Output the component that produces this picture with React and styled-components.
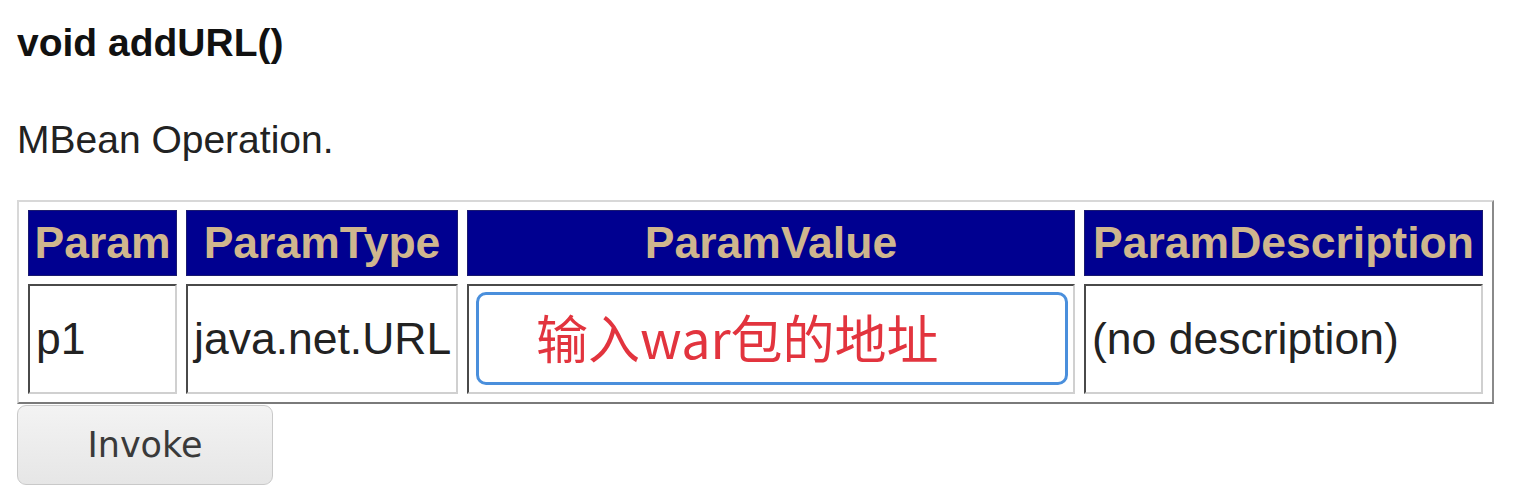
import styled, { createGlobalStyle } from 'styled-components';

const GlobalStyle = createGlobalStyle`
  body {
    margin: 0;
    background: #ffffff;
    font-family: "Liberation Sans", Arial, sans-serif;
  }
`;

export default function App() {
  return (
    <Page>
      <GlobalStyle />
      <Title>void addURL()</Title>
      <Description>MBean Operation.</Description>
      <ParamTable>
        <thead>
          <tr>
            <HeadCell $width={149}>Param</HeadCell>
            <HeadCell $width={272}>ParamType</HeadCell>
            <HeadCell $width={607}>ParamValue</HeadCell>
            <HeadCell $width={399}>ParamDescription</HeadCell>
          </tr>
        </thead>
        <tbody>
          <tr>
            <Cell>p1</Cell>
            <Cell>java.net.URL</Cell>
            <InputCell>
              <ValueInput defaultValue="输入war包的地址" />
            </InputCell>
            <Cell>(no description)</Cell>
          </tr>
        </tbody>
      </ParamTable>
      <InvokeButton>Invoke</InvokeButton>
    </Page>
  );
}

const Page = styled.div`
  padding: 20px 0 0 17px;
`;

const Title = styled.h4`
  margin: 0;
  font-size: 39px;
  font-weight: 700;
  color: #111;
  line-height: 45px;
`;

const Description = styled.p`
  margin: 53px 0 0;
  font-size: 39px;
  color: #222;
  line-height: 44px;
`;

const ParamTable = styled.table`
  margin-top: 38px;
  table-layout: fixed;
  border-collapse: separate;
  border-spacing: 9px 8px;
  border: 2px solid;
  border-color: #d8d8d8 #8a8a8a #7a7a7a #d8d8d8;
  font-size: 44.5px;
`;

const HeadCell = styled.th`
  box-sizing: border-box;
  width: ${(p) => p.$width}px;
  height: 66px;
  padding: 0 4px;
  background: #000090;
  color: #cfb68e;
  font-weight: 700;
  text-align: center;
  white-space: nowrap;
  border: 1px solid #1a1a70;
`;

const Cell = styled.td`
  box-sizing: border-box;
  height: 110px;
  padding: 0 0 0 6px;
  color: #222;
  white-space: nowrap;
  border: 2px solid;
  border-color: #4a4a4a #d0d0d0 #d0d0d0 #4a4a4a;
`;

const InputCell = styled(Cell)`
  padding: 6px 5px 7px 7px;
`;

const ValueInput = styled.input`
  box-sizing: border-box;
  width: 592px;
  height: 93px;
  padding: 0 0 4px 57px;
  border: 3px solid #4a8fdc;
  border-radius: 10px;
  outline: none;
  background: #fff;
  color: #e2343e;
  font-family: "Noto Sans CJK SC", "Liberation Sans", sans-serif;
  font-size: 52px;
`;

const InvokeButton = styled.button`
  display: block;
  margin-top: 1px;
  width: 256px;
  height: 80px;
  border: 1px solid #c9c9c9;
  border-radius: 9px;
  background: linear-gradient(#f3f3f3, #e6e6e6);
  color: #3a3a3a;
  font-family: "DejaVu Sans", sans-serif;
  font-size: 35px;
`;
